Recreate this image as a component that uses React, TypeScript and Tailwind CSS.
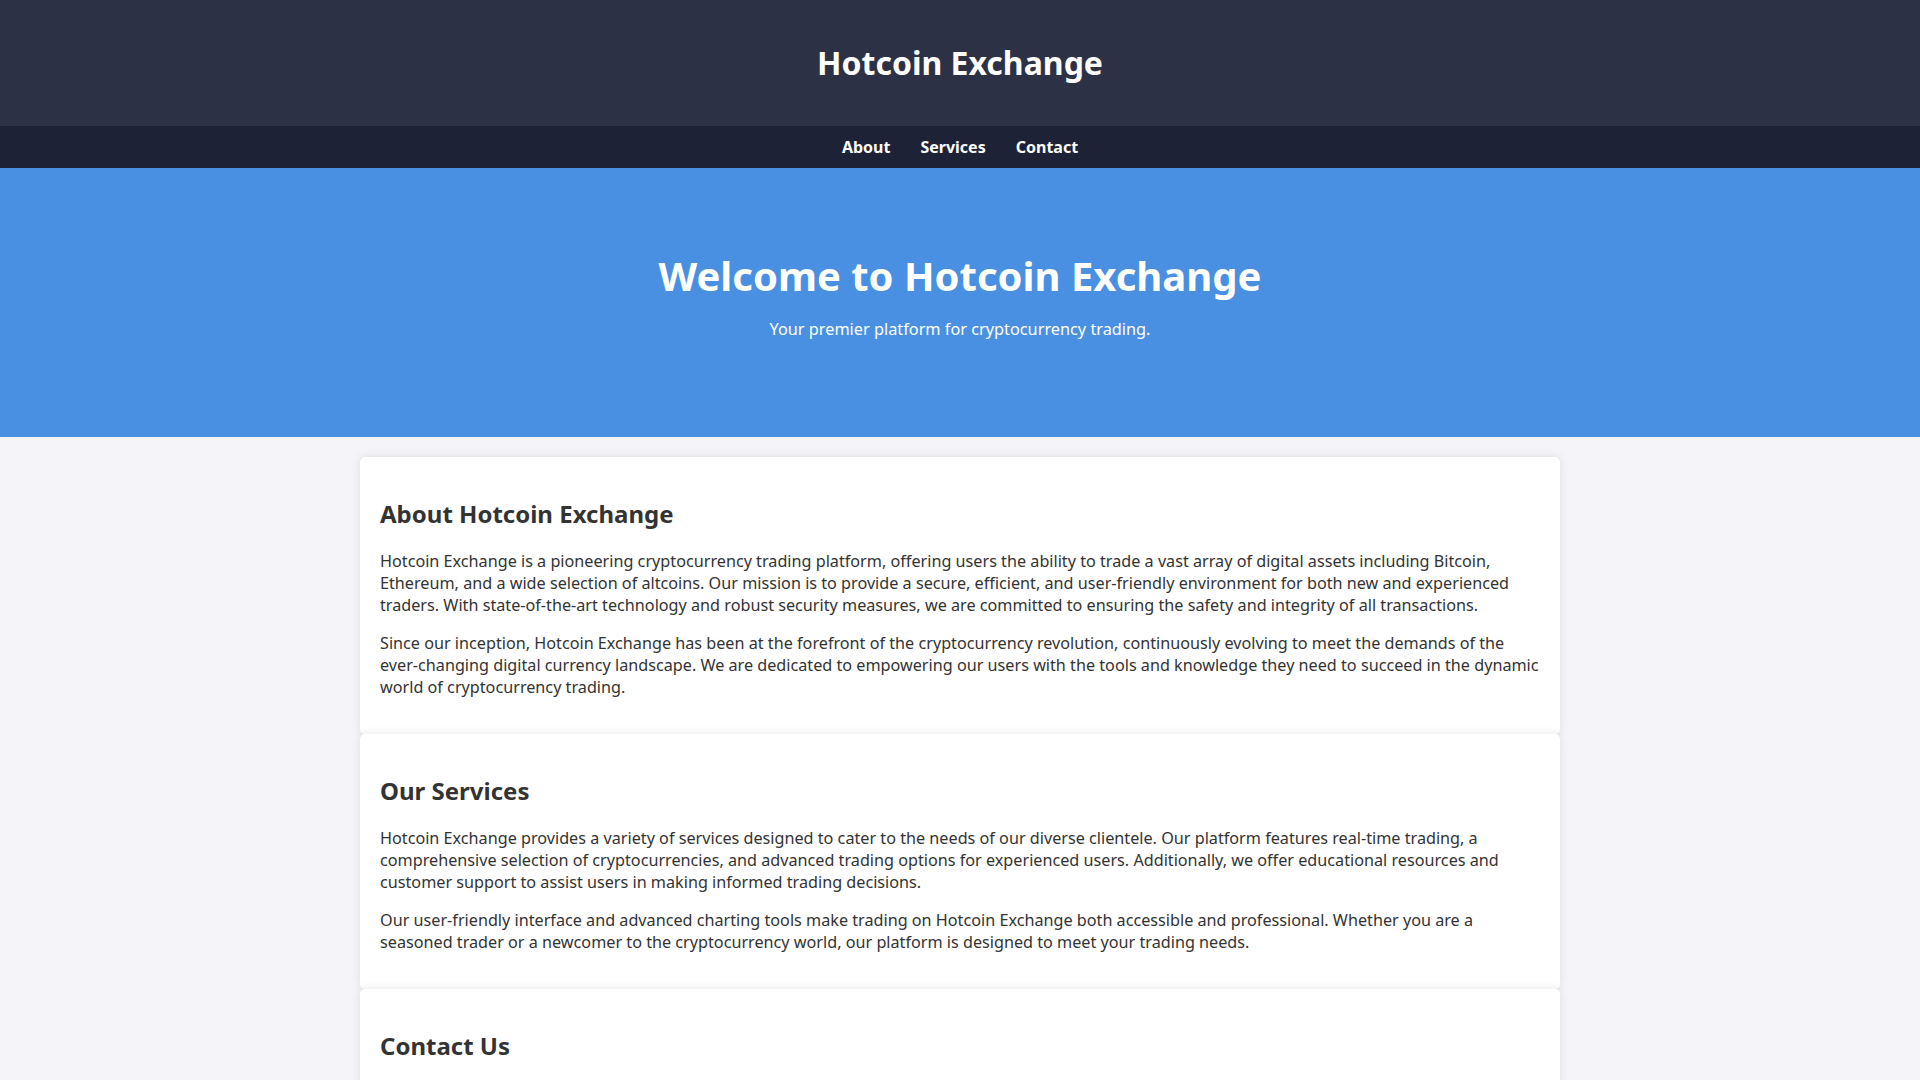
import React from 'react';

const NAV_LINKS = ['About', 'Services', 'Contact'];

const SECTIONS = [
  {
    id: 'about',
    title: 'About Hotcoin Exchange',
    paragraphs: [
      'Hotcoin Exchange is a pioneering cryptocurrency trading platform, offering users the ability to trade a vast array of digital assets including Bitcoin, Ethereum, and a wide selection of altcoins. Our mission is to provide a secure, efficient, and user-friendly environment for both new and experienced traders. With state-of-the-art technology and robust security measures, we are committed to ensuring the safety and integrity of all transactions.',
      'Since our inception, Hotcoin Exchange has been at the forefront of the cryptocurrency revolution, continuously evolving to meet the demands of the ever-changing digital currency landscape. We are dedicated to empowering our users with the tools and knowledge they need to succeed in the dynamic world of cryptocurrency trading.',
    ],
  },
  {
    id: 'services',
    title: 'Our Services',
    paragraphs: [
      'Hotcoin Exchange provides a variety of services designed to cater to the needs of our diverse clientele. Our platform features real-time trading, a comprehensive selection of cryptocurrencies, and advanced trading options for experienced users. Additionally, we offer educational resources and customer support to assist users in making informed trading decisions.',
      'Our user-friendly interface and advanced charting tools make trading on Hotcoin Exchange both accessible and professional. Whether you are a seasoned trader or a newcomer to the cryptocurrency world, our platform is designed to meet your trading needs.',
    ],
  },
  {
    id: 'contact',
    title: 'Contact Us',
    paragraphs: [
      'If you have any questions or need assistance, please feel free to reach out to our support team. We are available 24/7 to help you with any inquiries regarding your account, trading, or our services.',
      'Email: support@hotcoinexchange.com',
    ],
  },
];

export default function App() {
  return (
    <div className="min-h-screen bg-[#f4f4f9] text-[#333] font-['Noto_Sans',sans-serif] text-[16.2px] leading-[22px]">
      {/* header */}
      <header className="bg-[#2c3145] py-[41px] text-center">
        <h1 className="text-[32px] leading-[44px] font-bold text-white">Hotcoin Exchange</h1>
      </header>

      <nav className="bg-[#1e2236] py-[10px] flex justify-center gap-[30px] text-[16px]">
        {NAV_LINKS.map((link) => (
          <a key={link} href={'#' + link.toLowerCase()} className="text-white font-bold">
            {link}
          </a>
        ))}
      </nav>

      {/* hero */}
      <section className="bg-[#4a90e2] text-white text-center pt-[80px] pb-[97px]">
        <h2 className="text-[40px] leading-[55px] font-bold">Welcome to Hotcoin Exchange</h2>
        <p className="mt-[15px] text-[16.3px] leading-[22px]">
          Your premier platform for cryptocurrency trading.
        </p>
      </section>

      <main className="pt-5 pb-5">
        {SECTIONS.map((s) => (
          <section
            key={s.id}
            id={s.id}
            className="max-w-[1200px] mx-auto bg-white rounded-[5px] shadow-[0_0_10px_rgba(0,0,0,0.1)] p-5"
          >
            <h2 className="text-[24px] leading-[33px] font-bold mt-[20px] mb-[20px]">{s.title}</h2>
            {s.paragraphs.map((p, i) => (
              <p key={i} className="mb-4">
                {p}
              </p>
            ))}
          </section>
        ))}
      </main>

      <footer className="bg-[#2c3145] text-white text-center py-5">
        <p>&copy; 2024 Hotcoin Exchange. All rights reserved.</p>
      </footer>
    </div>
  );
}
